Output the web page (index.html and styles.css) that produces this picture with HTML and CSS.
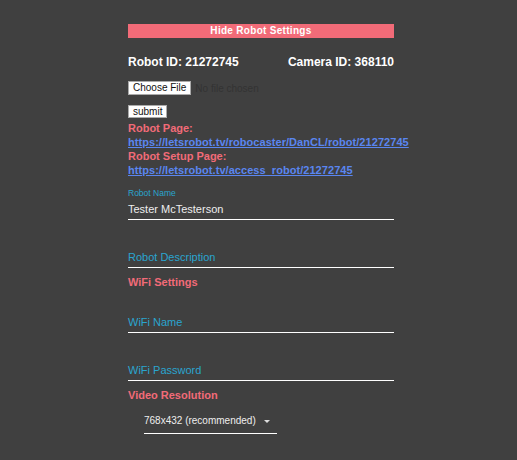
FILE: index.html
```html
<!DOCTYPE html>
<html>
<head>
<meta charset="utf-8">
<link rel="stylesheet" href="styles.css">
</head>
<body>
<div class="panel">
  <div class="hide-bar">Hide Robot Settings</div>
  <div class="ids">
    <span>Robot ID: 21272745</span>
    <span>Camera ID: 368110</span>
  </div>
  <div class="file-row">
    <span class="btn">Choose File</span>
    <span class="nofile">No file chosen</span>
  </div>
  <div class="submit-row"><span class="btn">submit</span></div>
  <div class="links">
    <div class="label">Robot Page:</div>
    <a class="link" href="#">https://letsrobot.tv/robocaster/DanCL/robot/21272745</a>
    <div class="label">Robot Setup Page:</div>
    <a class="link" href="#">https://letsrobot.tv/access_robot/21272745</a>
  </div>
  <div class="field filled">
    <div class="small-label">Robot Name</div>
    <div class="value">Tester McTesterson</div>
  </div>
  <div class="field empty desc">
    <div class="placeholder">Robot Description</div>
  </div>
  <div class="label section">WiFi Settings</div>
  <div class="field empty wifi-name">
    <div class="placeholder">WiFi Name</div>
  </div>
  <div class="field empty wifi-pass">
    <div class="placeholder">WiFi Password</div>
  </div>
  <div class="label section video">Video Resolution</div>
  <div class="select">
    <span>768x432 (recommended)</span>
    <span class="caret"></span>
  </div>
</div>
</body>
</html>
```
FILE: styles.css
```css
html, body {
  margin: 0;
  padding: 0;
  background: #404040;
  font-family: "Liberation Sans", Arial, sans-serif;
  height: 100%;
}
.panel {
  width: 266px;
  margin-left: 128px;
  padding-top: 24px;
  display: flex;
  flex-direction: column;
}
.hide-bar {
  background: #f26b78;
  color: #fff;
  font-weight: bold;
  font-size: 10px;
  height: 14px;
  line-height: 14px;
  text-align: center;
  letter-spacing: 0.3px;
}
.ids {
  display: flex;
  justify-content: space-between;
  color: #fff;
  font-weight: bold;
  font-size: 12px;
  margin-top: 17px;
  line-height: 14px;
}
.file-row {
  margin-top: 12px;
  display: flex;
  align-items: center;
  gap: 4px;
  height: 14px;
}
.btn {
  background: #fff;
  border: 1px solid #aaa;
  color: #111;
  font-size: 10px;
  line-height: 12px;
  padding: 0 4px;
  box-sizing: border-box;
  height: 14px;
  display: inline-flex;
  align-items: center;
}
.nofile {
  color: #333;
  font-size: 10px;
}
.submit-row {
  margin-top: 10px;
  display: flex;
}
.submit-row .btn { height: 13px; padding: 0 4px; }
.links {
  margin-top: 3px;
  display: flex;
  flex-direction: column;
}
.label {
  color: #f26b78;
  font-weight: bold;
  font-size: 11px;
  line-height: 14px;
}
.link {
  color: #5a86f0;
  font-weight: bold;
  font-size: 11px;
  line-height: 14px;
  letter-spacing: 0.05px;
  text-decoration: underline;
  white-space: nowrap;
}
.field {
  border-bottom: 1px solid #fff;
}
.filled {
  margin-top: 11px;
  padding-bottom: 3px;
}
.small-label {
  color: #2aa5cf;
  font-size: 8.5px;
  line-height: 10px;
}
.value {
  color: #eee;
  font-size: 11px;
  line-height: 14px;
  margin-top: 4px;
}
.placeholder {
  color: #2aa5cf;
  font-size: 11px;
  line-height: 14px;
}
.empty { padding-bottom: 3px; }
.desc { margin-top: 30px; }
.section { margin-top: 7px; }
.wifi-name { margin-top: 26px; }
.wifi-pass { margin-top: 30px; }
.video { margin-top: 7px; }
.select {
  margin: 12px 0 0 16px;
  width: 133px;
  border-bottom: 1px solid #fff;
  color: #eee;
  font-size: 10px;
  line-height: 14px;
  padding-bottom: 5px;
  display: flex;
  align-items: center;
  gap: 8px;
}
.caret {
  width: 0;
  height: 0;
  border-left: 3.5px solid transparent;
  border-right: 3.5px solid transparent;
  border-top: 3.5px solid #ddd;
}
```
